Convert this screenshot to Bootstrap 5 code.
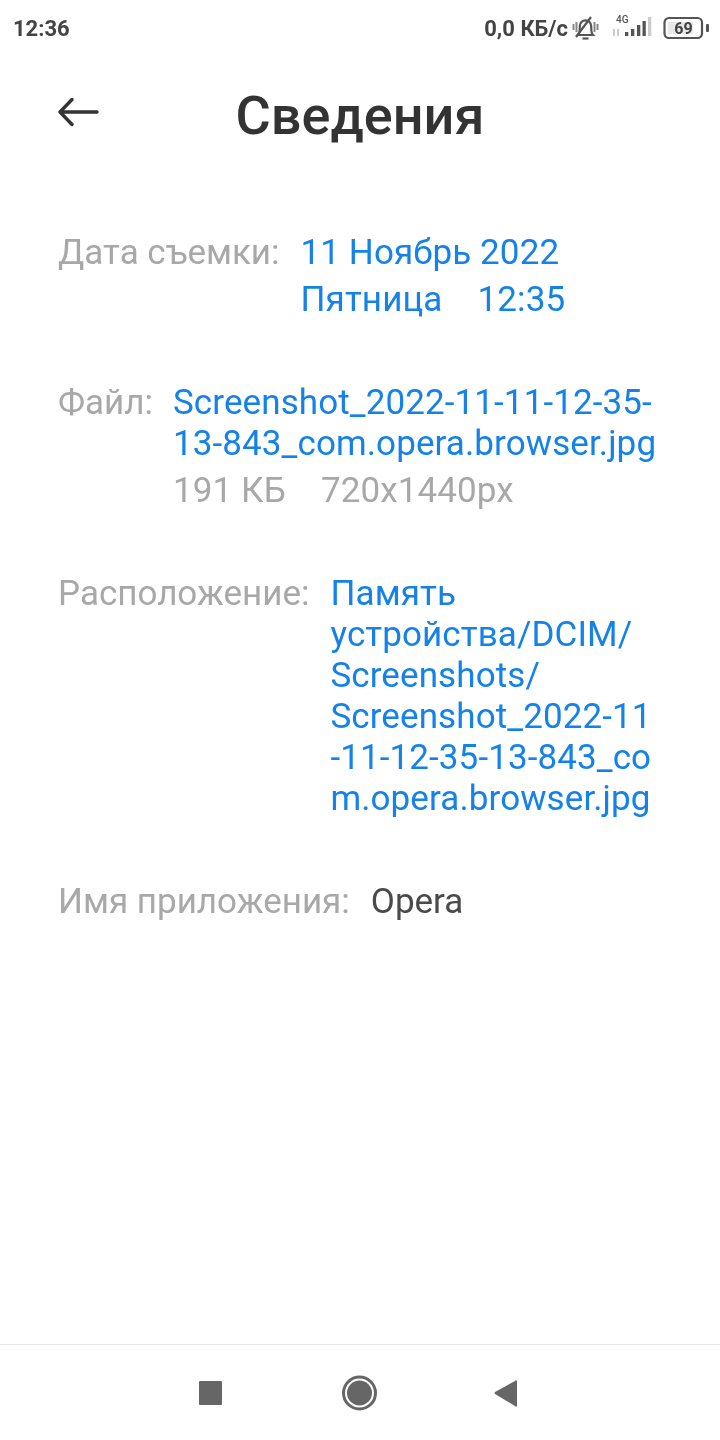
<!DOCTYPE html>
<html lang="ru">
<head>
  <meta charset="UTF-8" />
  <meta name="viewport" content="width=device-width, initial-scale=1.0"/>
  <title>Сведения</title>
  <link href="https://cdn.jsdelivr.net/npm/bootstrap@5.3.3/dist/css/bootstrap.min.css" rel="stylesheet">
  <style>
    html, body { height: 1440px; overflow: hidden; }
    body { font-family: Roboto, "Liberation Sans", sans-serif; background: #fff; color: #333; }
    .screen { width: 720px; height: 1440px; will-change: transform; }
    .status-bar { height: 56px; padding: 0 10px 0 13px; color: #444; font-weight: 700; font-size: 22px; }
    .status-speed { margin-right: 4px; }
    .status-signal { margin-left: 13px; }
    .status-batt { margin-left: 11px; }
    .title-bar { height: 120px; padding: 0 56px; display: grid; grid-template-columns: 1fr auto 1fr; align-items: center; }
    .page-title { font-size: 54px; font-weight: 500; color: #333; line-height: 1; margin: 0; }
    .back-icon { margin-top: -4px; }
    .info { padding: 0 58px; font-size: 35px; line-height: 41px; }
    .info-row { display: flex; }
    .info-label { color: #a8a8a8; white-space: nowrap; margin-right: 21px; }
    .info-val { color: #1482e8; letter-spacing: .1px; }
    .info-val-plain { color: #4a4a4a; }
    .info-sub { color: #a8a8a8; margin-top: 6px; letter-spacing: .1px; }
    .row-date { margin-top: 53px; }
    .row-date .info-val, .row-date .info-label { line-height: 47px; }
    .row-file { margin-top: 59px; }
    .row-file .info-label { margin-right: 20px; }
    .row-path { margin-top: 62px; }
    .row-app { margin-top: 62px; }
    .nav-bar { height: 96px; border-top: 1px solid #e6e6e6; }
  </style>
</head>
<body>
  <div class="screen d-flex flex-column">
    <!-- status bar -->
    <div class="status-bar d-flex align-items-center">
      <span>12:36</span>
      <span class="ms-auto status-speed">0,0 КБ/с</span>
      <svg width="27" height="28" viewBox="0 0 27 28" fill="none" stroke="#555" stroke-width="2.200">
        <path d="M1.500 10v6M4.500 8v10M22.500 8v10M25.500 10v6" stroke-width="2" stroke="#888"/>
        <path d="M6 21c2-2 1.800-5 1.800-9a5.700 5.700 0 0 1 11.400 0c0 4-.2 7 1.800 9z" fill="#fff"/>
        <path d="M10.500 24.500h6"/>
        <path d="M4 23 19 3"/>
      </svg>
      <svg class="status-signal" width="40" height="28" viewBox="0 0 40 28">
        <text x="4" y="9" font-size="10" font-weight="500" font-family="Roboto" fill="#555">4G</text>
        <rect x="13" y="18" width="3.300" height="4" fill="#555"/>
        <rect x="19" y="15" width="3.300" height="7" fill="#555"/>
        <rect x="25" y="11" width="3.300" height="11" fill="#555"/>
        <rect x="30.500" y="7" width="3.300" height="15" fill="#555"/>
        <rect x="36" y="3" width="3.300" height="19" fill="#ccc"/>
        <path d="M2 15v7M6 15v7" stroke="#bbb" stroke-width="1.500"/>
      </svg>
      <svg class="status-batt" width="47" height="24" viewBox="0 0 47 24">
        <rect x="1.500" y="2" width="37.500" height="20" rx="4.500" fill="#fff" stroke="#555" stroke-width="2.200"/>
        <rect x="5" y="6" width="25" height="12" fill="#e8e8e8"/>
        <text x="20.500" y="17.500" text-anchor="middle" font-size="16" font-family="Roboto" fill="#444">69</text>
        <rect x="43" y="8" width="3" height="8" rx="1" fill="#555"/>
      </svg>
    </div>

    <!-- title -->
    <div class="title-bar">
      <svg class="back-icon" width="44" height="32" viewBox="0 0 44 32" fill="none" stroke="#333" stroke-width="3.400" stroke-linecap="round" stroke-linejoin="round">
        <path d="M4 14h37M16 1.500 4 14l12 12.500"/>
      </svg>
      <h1 class="page-title">Сведения</h1>
    </div>

    <!-- details -->
    <div class="info flex-grow-1">
      <div class="info-row row-date">
        <div class="info-label">Дата съемки:</div>
        <div class="info-val">11 Ноябрь 2022<br>Пятница&nbsp;&nbsp;&nbsp;&nbsp;12:35</div>
      </div>
      <div class="info-row row-file">
        <div class="info-label">Файл:</div>
        <div>
          <div class="info-val">Screenshot_2022-11-11-12-35-<br>13-843_com.opera.browser.jpg</div>
          <div class="info-sub">191 КБ&nbsp;&nbsp;&nbsp;&nbsp;720x1440px</div>
        </div>
      </div>
      <div class="info-row row-path">
        <div class="info-label">Расположение:</div>
        <div class="info-val">Память<br>устройства/DCIM/<br>Screenshots/<br>Screenshot_2022-11<br>-11-12-35-13-843_co<br>m.opera.browser.jpg</div>
      </div>
      <div class="info-row row-app">
        <div class="info-label">Имя приложения:</div>
        <div class="info-val-plain">Opera</div>
      </div>
    </div>

    <!-- nav bar -->
    <div class="nav-bar d-flex align-items-center justify-content-center">
      <svg width="340" height="40" viewBox="0 0 340 40" fill="#666">
        <rect x="9" y="8" width="23" height="24" rx="1"/>
        <circle cx="169.500" cy="20" r="16" fill="none" stroke="#666" stroke-width="3"/>
        <circle cx="169.500" cy="20" r="12.500"/>
        <path d="M327 9v23a1 1 0 0 1-2 1L305 21a1.500 1.500 0 0 1 0-2L325 8a1 1 0 0 1 2 1z"/>
      </svg>
    </div>
  </div>
  <script src="https://cdn.jsdelivr.net/npm/bootstrap@5.3.3/dist/js/bootstrap.bundle.min.js"></script>
</body>
</html>
